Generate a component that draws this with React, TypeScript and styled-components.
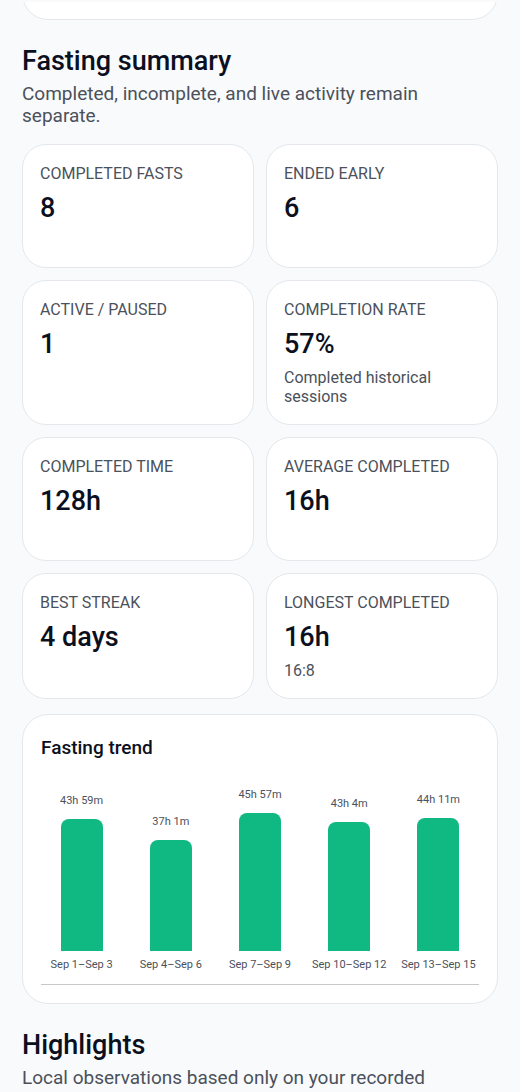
import styled, { createGlobalStyle } from 'styled-components';

interface IStat {
    label: string;
    value: string;
    note?: string;
}

interface ITrend {
    range: string;
    minutes: number;
}

const stats: IStat[] = [
    { label: 'Completed fasts', value: '8' },
    { label: 'Ended early', value: '6' },
    { label: 'Active / paused', value: '1' },
    {
        label: 'Completion rate',
        value: '57%',
        note: 'Completed historical sessions',
    },
    { label: 'Completed time', value: '128h' },
    { label: 'Average completed', value: '16h' },
    { label: 'Best streak', value: '4 days' },
    { label: 'Longest completed', value: '16h', note: '16:8' },
];

const trend: ITrend[] = [
    { range: 'Sep 1–Sep 3', minutes: 2639 },
    { range: 'Sep 4–Sep 6', minutes: 2221 },
    { range: 'Sep 7–Sep 9', minutes: 2757 },
    { range: 'Sep 10–Sep 12', minutes: 2584 },
    { range: 'Sep 13–Sep 15', minutes: 2651 },
];

const MAX_BAR = 138;

const GlobalStyle = createGlobalStyle`
    * {
        box-sizing: border-box;
    }

    body {
        margin: 0;
        background: #f9fafc;
        color: #0b1020;
        font-family: Roboto, 'Liberation Sans', sans-serif;
    }

    h2, h3, p, dl, dt, dd, ul {
        margin: 0;
        padding: 0;
    }
`;

const BarEdge = styled.div`
    position: sticky;
    top: 0;
    z-index: 1;
    height: 2px;
    background: #f9fafc;
`;

const Page = styled.main`
    padding: 0 22px 4px;
    overflow: hidden;
`;

const Card = styled.section`
    border: 1px solid #e4e8ec;
    border-radius: 26px;
    background: #fff;
`;

const PreviousCard = styled(Card)`
    height: 60px;
    margin-top: -42px;
`;

const SectionHeader = styled.header`
    padding-top: 25px;
`;

const SectionTitle = styled.h2`
    margin-bottom: 6px;
    font-size: 27px;
    font-weight: 500;
    line-height: 32px;
`;

const SectionDesc = styled.p`
    color: #4b515b;
    font-size: 19px;
    line-height: 22px;
`;

const StatGrid = styled.dl`
    display: grid;
    grid-template-columns: repeat(2, 1fr);
    gap: 12px;
    margin: 17px 0 15px;
`;

const StatCard = styled.div`
    min-height: 124px;
    padding: 19px 17px 18px;
    border: 1px solid #e4e8ec;
    border-radius: 24px;
    background: #fff;
`;

const StatLabel = styled.dt`
    color: #4b515b;
    font-size: 16px;
    line-height: 20px;
    text-transform: uppercase;
`;

const StatValue = styled.dd`
    margin-top: 8px;
    font-size: 27px;
    font-weight: 500;
    line-height: 32px;
`;

const StatNote = styled.dd`
    margin-top: 8px;
    color: #4b515b;
    font-size: 16px;
    line-height: 19px;
`;

const ChartCard = styled(Card)`
    padding: 22px 18px 18px;
`;

const ChartTitle = styled.h3`
    font-size: 19px;
    font-weight: 500;
    line-height: 22px;
`;

const Chart = styled.ul`
    display: grid;
    grid-template-columns: repeat(5, 1fr);
    gap: 8px;
    align-items: end;
    margin-top: 29px;
    padding-bottom: 12px;
    border-bottom: 1px solid #c6c8cc;
    list-style: none;
`;

const Column = styled.li`
    display: flex;
    flex-direction: column;
    align-items: center;
    color: #4b515b;
    font-size: 11px;
    line-height: 14px;
    white-space: nowrap;
`;

const Bar = styled.div`
    width: 42px;
    margin: 11px 0 7px;
    border-radius: 8px 8px 0 0;
    background: #10b981;
`;

const formatDuration = (minutes: number) =>
    `${Math.floor(minutes / 60)}h ${minutes % 60}m`;

const StatList = ({ data }: { data: IStat[] }) => {
    return (
        <StatGrid>
            {data.map((stat) => (
                <StatCard key={stat.label}>
                    <StatLabel>{stat.label}</StatLabel>
                    <StatValue>{stat.value}</StatValue>
                    {stat.note && <StatNote>{stat.note}</StatNote>}
                </StatCard>
            ))}
        </StatGrid>
    );
};

const TrendChart = ({ data }: { data: ITrend[] }) => {
    const max = Math.max(...data.map((d) => d.minutes));

    return (
        <ChartCard>
            <ChartTitle>Fasting trend</ChartTitle>
            <Chart>
                {data.map((d) => (
                    <Column key={d.range}>
                        <span>{formatDuration(d.minutes)}</span>
                        <Bar
                            style={{
                                height: Math.round(
                                    (d.minutes / max) * MAX_BAR,
                                ),
                            }}
                        />
                        <span>{d.range}</span>
                    </Column>
                ))}
            </Chart>
        </ChartCard>
    );
};

const App = () => {
    return (
        <>
            <GlobalStyle />
            <BarEdge />
            <Page>
                <PreviousCard />
                <SectionHeader>
                    <SectionTitle>Fasting summary</SectionTitle>
                    <SectionDesc>
                        Completed, incomplete, and live activity remain
                        separate.
                    </SectionDesc>
                </SectionHeader>
                <StatList data={stats} />
                <TrendChart data={trend} />
                <SectionHeader>
                    <SectionTitle>Highlights</SectionTitle>
                    <SectionDesc>
                        Local observations based only on your recorded
                    </SectionDesc>
                </SectionHeader>
            </Page>
        </>
    );
};

export default App;
